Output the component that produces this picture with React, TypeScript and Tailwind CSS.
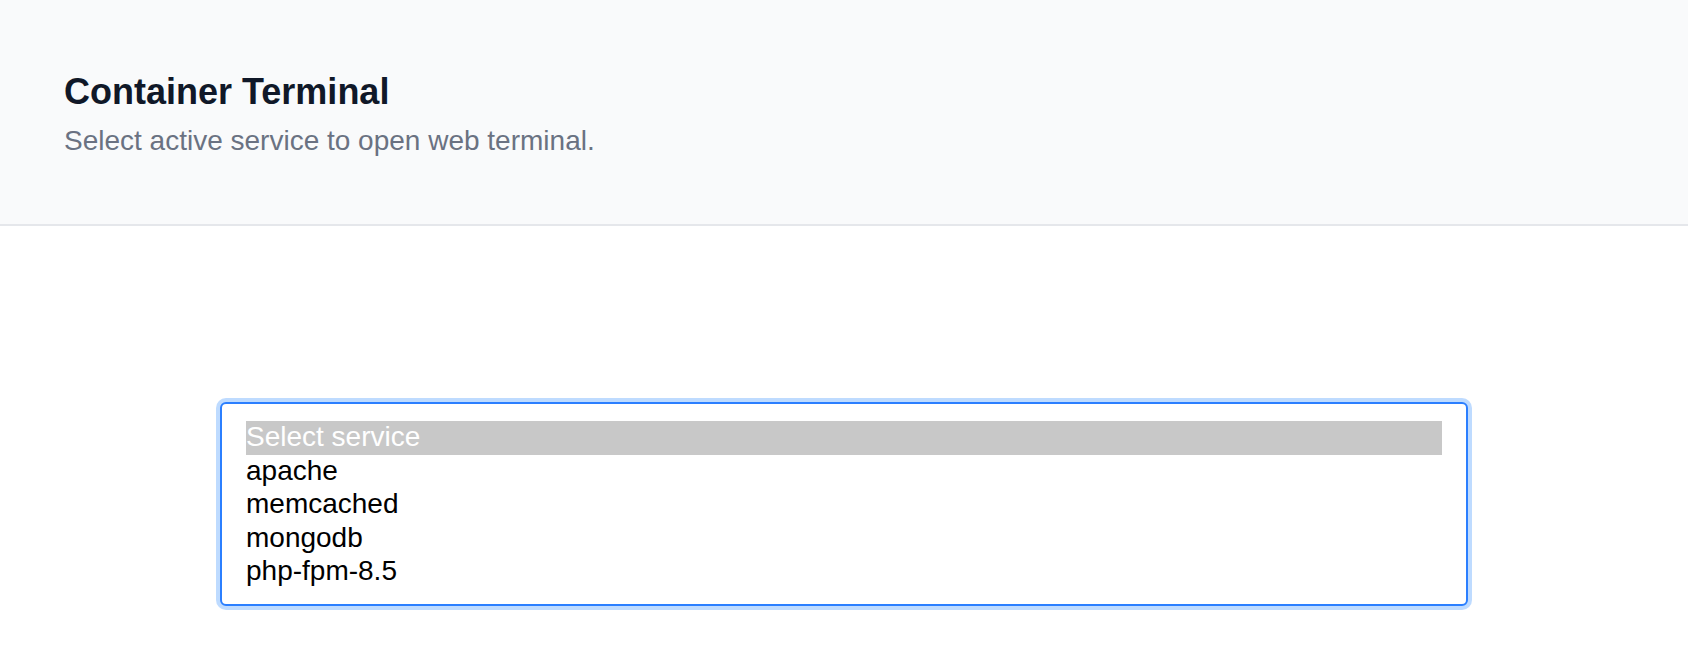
export default function App() {
  return (
    <div className="min-h-screen bg-white font-['Liberation_Sans',Arial,sans-serif]">
      <header className="bg-gray-50 border-b-2 border-gray-200 px-16 pt-[72px] pb-[65px]">
        <h1 className="text-[36px] leading-[40px] font-bold text-gray-900">Container Terminal</h1>
        <p className="mt-[11px] text-[28px] leading-[36px] text-gray-500">
          Select active service to open web terminal.
        </p>
      </header>

      <main className="pt-44">
        <div className="max-w-7xl mx-auto px-4">
          <select
            size={5}
            defaultValue=""
            className="w-full px-6 pt-[17px] pb-[15px] text-[28px] text-black bg-white border-2 border-blue-500 rounded-md ring-4 ring-blue-200 outline-none overflow-hidden"
          >
            <option value="" className="bg-[#c8c8c8] text-white checked:bg-[#c8c8c8] checked:text-white">
              Select service
            </option>
            <option value="apache">apache</option>
            <option value="memcached">memcached</option>
            <option value="mongodb">mongodb</option>
            <option value="php-fpm-8.5">php-fpm-8.5</option>
          </select>
        </div>
      </main>
    </div>
  );
}
